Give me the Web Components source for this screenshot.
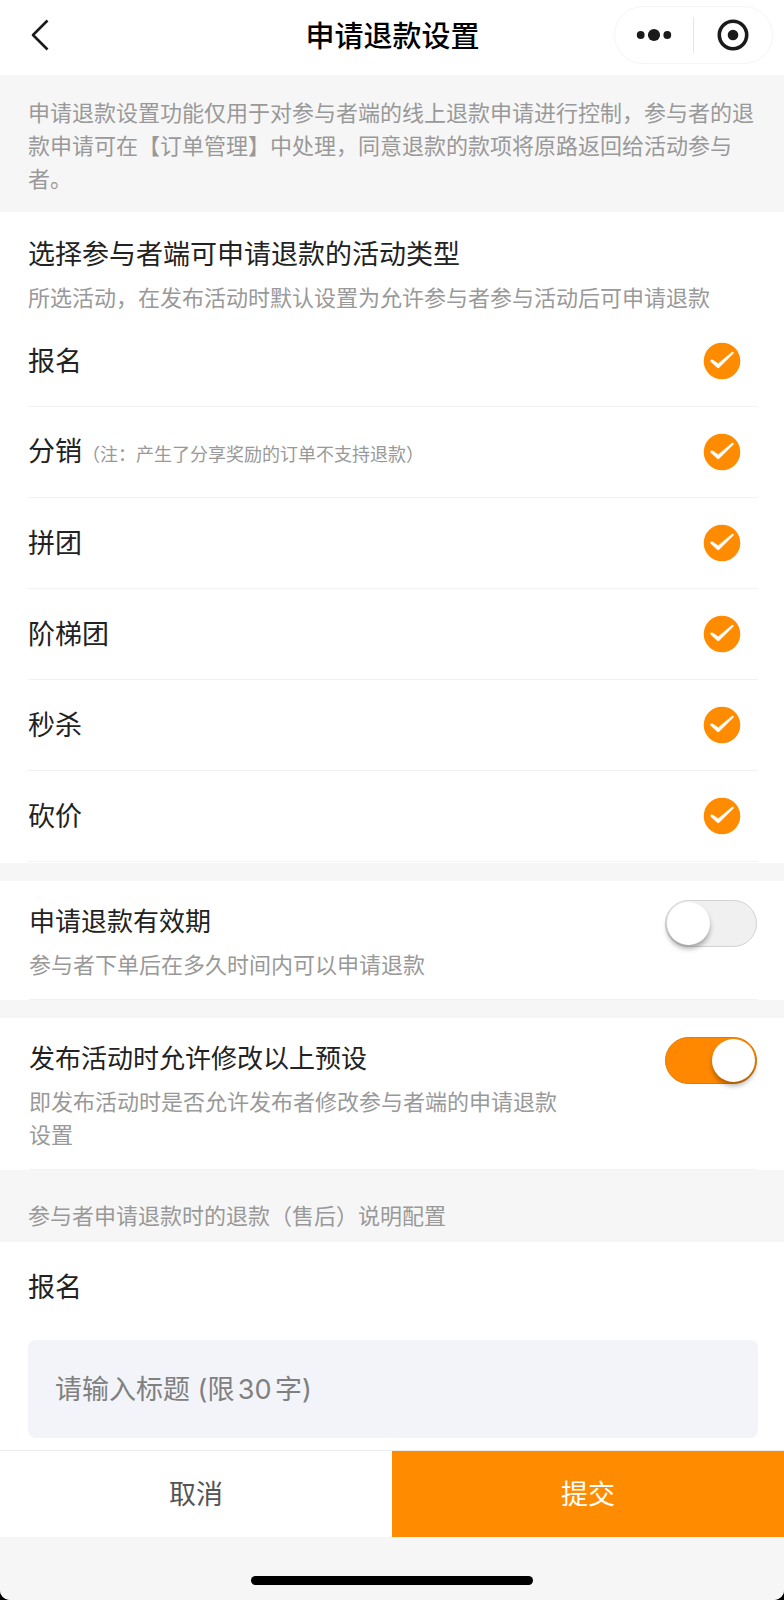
<!DOCTYPE html>
<html lang="zh-CN">
<head>
<meta charset="utf-8">
<meta name="viewport" content="width=device-width, initial-scale=1">
<title>申请退款设置</title>
<style>
  html {
    background: #000000;
  }

  body {
    margin: 0;
    font-family: "Noto Sans CJK SC", sans-serif;
    font-size: 27px;
    line-height: 38px;
    color: #222222;
    --accent: #ff8c00;
    --grey: #f6f6f6;
    --line: #f2f2f2;
    --muted: #999999;
  }
</style>
</head>
<body>
<refund-page>
  <nav-bar slot="header">申请退款设置</nav-bar>

  <grey-note>申请退款设置功能仅用于对参与者端的线上退款申请进行控制，参与者的退款申请可在【订单管理】中处理，同意退款的款项将原路返回给活动参与者。</grey-note>

  <activity-list>
    <span slot="title">选择参与者端可申请退款的活动类型</span>
    <span slot="hint">所选活动，在发布活动时默认设置为允许参与者参与活动后可申请退款</span>
    <activity-option>报名</activity-option>
    <activity-option>分销<span slot="note">（注：产生了分享奖励的订单不支持退款）</span></activity-option>
    <activity-option>拼团</activity-option>
    <activity-option>阶梯团</activity-option>
    <activity-option>秒杀</activity-option>
    <activity-option>砍价</activity-option>
  </activity-list>

  <switch-setting>
    申请退款有效期
    <span slot="hint">参与者下单后在多久时间内可以申请退款</span>
  </switch-setting>

  <switch-setting checked>
    发布活动时允许修改以上预设
    <span slot="hint">即发布活动时是否允许发布者修改参与者端的申请退款设置</span>
  </switch-setting>

  <grey-note compact>参与者申请退款时的退款（售后）说明配置</grey-note>

  <title-field placeholder="请输入标题 (限30字)">报名</title-field>

  <action-bar slot="footer"></action-bar>
</refund-page>

<script>
function makeTemplate(html) {
  const template = document.createElement('template');
  template.innerHTML = html;
  return template;
}

class BaseComponent extends HTMLElement {
  constructor(){
    super();
    this.attachShadow({mode: 'open'});
    this.shadowRoot.appendChild(this.constructor.template.content.cloneNode(true));
  }
}

class RefundPage extends BaseComponent {
  static template = makeTemplate(`
<style>
  :host {
    display: flex;
    flex-direction: column;
    min-height: 100vh;
    background: var(--grey);
    border-radius: 0 0 10px 10px;
    overflow: hidden;
  }

  main {
    flex: 1;
    background: #ffffff;
  }
</style>
<slot name="header"></slot>
<main><slot></slot></main>
<slot name="footer"></slot>
`);
}

class NavBar extends BaseComponent {
  static template = makeTemplate(`
<style>
  :host {
    display: grid;
    grid-template-columns: 1fr auto 1fr;
    align-items: center;
    height: 70px;
    padding: 0 11px 5px 28px;
    background: #ffffff;
  }

  h1 {
    margin: 0;
    padding: 0 16px 2px 0;
    font-size: 29px;
    font-weight: 500;
    color: #000000;
  }

  button {
    display: flex;
    align-items: center;
    justify-content: center;
    padding: 0;
    border: 0;
    background: none;
    color: #1a1a1a;
    cursor: pointer;
  }

  .back {
    width: 26px;
    height: 36px;
  }

  .capsule {
    display: flex;
    align-items: center;
    justify-self: end;
    height: 56px;
    border: 1px solid #f5f5f5;
    border-radius: 29px;
  }

  .capsule button {
    width: 78px;
    height: 56px;
  }

  .divider {
    width: 1px;
    height: 36px;
    background: #e6e6e6;
  }
</style>
<button class="back" type="button" aria-label="返回">
  <svg width="26" height="36" viewBox="0 0 26 36" fill="none" stroke="currentColor" stroke-width="2.6">
    <path d="M19.5 3.500L5 18L19.500 32.500" stroke-linejoin="round"/>
  </svg>
</button>
<h1><slot></slot></h1>
<div class="capsule">
  <button type="button" aria-label="更多">
    <svg width="36" height="14" viewBox="0 0 36 14" fill="currentColor">
      <circle cx="4.700" cy="7" r="3.900"/>
      <circle cx="18" cy="7" r="6.100"/>
      <circle cx="31.300" cy="7" r="3.900"/>
    </svg>
  </button>
  <span class="divider"></span>
  <button type="button" aria-label="关闭">
    <svg width="32" height="32" viewBox="0 0 32 32">
      <circle cx="16" cy="16" r="13.700" fill="none" stroke="currentColor" stroke-width="3.600"/>
      <circle cx="16" cy="16" r="5.300" fill="currentColor"/>
    </svg>
  </button>
</div>
`);
}

class GreyNote extends BaseComponent {
  static template = makeTemplate(`
<style>
  :host {
    display: block;
    padding: 20px 26px 18px 28px;
    background: var(--grey);
    color: var(--muted);
    font-size: 22px;
    line-height: 33px;
  }

  :host([compact]) {
    padding: 28px 26px 11px 28px;
  }

  p {
    margin: 0;
  }
</style>
<p><slot></slot></p>
`);
}

class ActivityList extends BaseComponent {
  static template = makeTemplate(`
<style>
  :host {
    display: block;
    padding: 22px 26px 1px 28px;
  }

  h2 {
    margin: 0 0 8px;
    font-size: 27px;
    font-weight: 400;
  }

  p {
    margin: 0 0 3px;
    font-size: 22px;
    line-height: 33px;
    color: var(--muted);
  }
</style>
<h2><slot name="title"></slot></h2>
<p><slot name="hint"></slot></p>
<slot></slot>
`);
}

class ActivityOption extends BaseComponent {
  static template = makeTemplate(`
<style>
  :host {
    display: block;
    border-bottom: 1px solid var(--line);
  }

  label {
    display: flex;
    align-items: center;
    justify-content: space-between;
    min-height: 90px;
    padding-right: 17px;
    cursor: pointer;
  }

  .name {
    padding-bottom: 2px;
  }

  slot[name="note"] {
    font-size: 18px;
    color: var(--muted);
  }

  .check {
    display: grid;
    width: 38px;
    height: 38px;
  }

  .check > * {
    grid-area: 1 / 1;
  }

  input {
    appearance: none;
    width: 100%;
    height: 100%;
    margin: 0;
    border: 1px solid #cccccc;
    border-radius: 50%;
    cursor: pointer;
  }

  input:checked {
    border-color: transparent;
  }

  svg {
    visibility: hidden;
    pointer-events: none;
  }

  input:checked + svg {
    visibility: visible;
  }
</style>
<label>
  <span class="name"><slot></slot><slot name="note"></slot></span>
  <span class="check">
    <input type="checkbox" checked>
    <svg width="38" height="38" viewBox="0 0 38 38">
      <circle cx="19" cy="19" r="18.300" fill="#ff8c00"/>
      <path d="M7.700 18.200Q8.600 17.200 9.800 18L15.200 21.700L29 10.200Q30.300 9.600 30.700 11L16.300 25.300Q15.200 26.500 14 25.300L8 19.700Q7.300 19 7.700 18.200Z" fill="#ffffff" stroke="#ffffff" stroke-width="0.5"/>
    </svg>
  </span>
</label>
`);
}

class SwitchSetting extends BaseComponent {
  static template = makeTemplate(`
<style>
  :host {
    display: block;
    padding: 0 27px 0 29px;
    border-top: 18px solid var(--grey);
  }

  label {
    display: flex;
    align-items: flex-start;
    justify-content: space-between;
    padding: 19px 0 17px;
    border-bottom: 1px solid var(--line);
    cursor: pointer;
  }

  .text {
    flex: 0 1 75%;
    padding-top: 1px;
    font-size: 26px;
  }

  .hint {
    display: block;
    margin: 8px 0 2px;
    font-size: 22px;
    line-height: 33px;
    color: var(--muted);
  }

  input {
    appearance: none;
    display: flex;
    flex: none;
    box-sizing: border-box;
    width: 92px;
    height: 47px;
    margin: 0;
    padding: 1px;
    border: 1px solid #d2d2d2;
    border-radius: 24px;
    background: #f0f0f0;
    cursor: pointer;
  }

  input::before {
    content: "";
    width: 43px;
    height: 43px;
    border-radius: 50%;
    background: #ffffff;
    box-shadow: 0 4px 5px rgba(0, 0, 0, 0.3);
  }

  input:checked {
    justify-content: flex-end;
    border-color: #e07a08;
    background: #ff8800;
  }
</style>
<label>
  <span class="text"><slot></slot><span class="hint"><slot name="hint"></slot></span></span>
  <input type="checkbox" role="switch">
</label>
`);

  connectedCallback(){
    this.shadowRoot.querySelector('input').checked = this.hasAttribute('checked');
  }
}

class TitleField extends BaseComponent {
  static template = makeTemplate(`
<style>
  :host {
    display: block;
    padding: 25px 26px 12px 28px;
  }

  label {
    display: block;
    margin-bottom: 35px;
  }

  input {
    display: block;
    box-sizing: border-box;
    width: 100%;
    height: 98px;
    padding: 0 27px;
    border: 0;
    border-radius: 8px;
    outline: none;
    background: #f3f4f9;
    color: #222222;
    font-family: Inter, "Noto Sans CJK SC", sans-serif;
    font-size: 27px;
    text-autospace: normal;
  }

  input::placeholder {
    color: #808080;
    opacity: 1;
  }
</style>
<label for="field"><slot></slot></label>
<input id="field" type="text" maxlength="30">
`);

  connectedCallback(){
    this.shadowRoot.querySelector('input').placeholder = this.getAttribute('placeholder');
  }
}

class ActionBar extends BaseComponent {
  static template = makeTemplate(`
<style>
  :host {
    display: block;
    background: var(--grey);
  }

  .actions {
    display: grid;
    grid-template-columns: 1fr 1fr;
    border-top: 1px solid #ececec;
  }

  button {
    height: 86px;
    padding: 0 0 2px;
    border: 0;
    background: #ffffff;
    color: #555555;
    font: inherit;
    cursor: pointer;
  }

  .submit {
    background: var(--accent);
    color: #ffffff;
  }

  .home {
    width: 36%;
    height: 9px;
    margin: 39px auto 15px;
    border-radius: 5px;
    background: #000000;
  }
</style>
<div class="actions">
  <button type="button">取消</button>
  <button class="submit" type="button">提交</button>
</div>
<div class="home"></div>
`);
}

customElements.define('refund-page', RefundPage);
customElements.define('nav-bar', NavBar);
customElements.define('grey-note', GreyNote);
customElements.define('activity-list', ActivityList);
customElements.define('activity-option', ActivityOption);
customElements.define('switch-setting', SwitchSetting);
customElements.define('title-field', TitleField);
customElements.define('action-bar', ActionBar);
</script>
</body>
</html>
